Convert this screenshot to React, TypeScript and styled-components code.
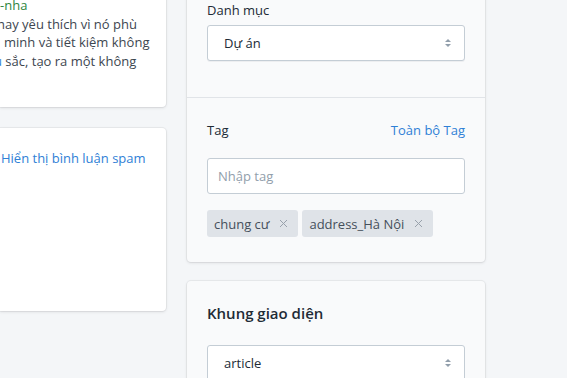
import * as React from 'react'
import styled, { createGlobalStyle } from 'styled-components'

const GlobalStyle = createGlobalStyle`
  html, body {
    margin: 0;
    padding: 0;
    background: #f4f6f8;
    font-family: "Open Sans", "Noto Sans", sans-serif;
    color: #212b36;
    overflow: hidden;
  }
`

const Page = styled.div`
  display: flex;
  gap: 21px;
  align-items: flex-start;
  margin-top: -20px;
  width: 567px;
  height: 398px;
  overflow: hidden;
`

const LeftColumn = styled.div`
  display: flex;
  flex-direction: column;
  gap: 21px;
  width: 166px;
  flex: 0 0 166px;
`

const RightColumn = styled.div`
  display: flex;
  flex-direction: column;
  gap: 19px;
  width: 298px;
  flex: 0 0 298px;
`

const Card = styled.div<{ $tint?: boolean }>`
  background: ${p => (p.$tint ? '#f9fafb' : '#ffffff')};
  border-radius: 0 4px 4px 0;
  box-shadow: 0 0 0 1px rgba(63, 63, 68, 0.06), 0 1px 3px rgba(63, 63, 68, 0.14);
  overflow: hidden;
`

const RightCard = styled(Card)`
  border-radius: 4px;
`

const TextBlock = styled.div`
  padding: 16px 0 37px;
  font-size: 13px;
  line-height: 18.5px;
  color: #3d4650;
`

const Line = styled.div<{ $offset: number }>`
  white-space: nowrap;
  margin-left: ${p => p.$offset}px;
`

const Green = styled.span`
  color: #2e8540;
`

const Blue = styled.span`
  color: #3a86d8;
`

const SpamLink = styled.a`
  display: block;
  height: 183px;
  box-sizing: border-box;
  padding-top: 21px;
  margin-left: 1px;
  font-size: 13px;
  line-height: 18px;
  color: #2f80d6;
  text-decoration: none;
  white-space: nowrap;
`

const Section = styled.div<{ $top: number; $bottom: number; $divider?: boolean }>`
  padding: ${p => p.$top}px 20px ${p => p.$bottom}px;
  border-bottom: ${p => (p.$divider ? '1px solid #e1e4e8' : 'none')};
`

const Label = styled.div`
  font-size: 13px;
  line-height: 20px;
  color: #212b36;
  margin-bottom: 5px;
`

const LabelRow = styled.div`
  display: flex;
  justify-content: space-between;
  align-items: center;
  font-size: 13px;
  line-height: 20px;
  margin-bottom: 18px;
`

const AllTags = styled.a`
  color: #2f80d6;
  text-decoration: none;
`

const Heading = styled.div`
  font-size: 15px;
  font-weight: 600;
  line-height: 20px;
  color: #212b36;
  margin-bottom: 22px;
`

const SelectBox = styled.div`
  display: flex;
  align-items: center;
  justify-content: space-between;
  height: 36px;
  box-sizing: border-box;
  padding: 0 12px 0 16px;
  background: #fff;
  border: 1px solid #c4cdd5;
  border-radius: 3px;
  box-shadow: 0 1px 0 rgba(22, 29, 37, 0.05);
  font-size: 13px;
  color: #212b36;
`

const TagInput = styled.div`
  height: 36px;
  box-sizing: border-box;
  padding: 0 10px;
  display: flex;
  align-items: center;
  background: #fff;
  border: 1px solid #c4cdd5;
  border-radius: 3px;
  font-size: 13px;
  color: #919eab;
`

const Tags = styled.div`
  display: flex;
  gap: 4px;
  margin-top: 16px;
`

const Chip = styled.div`
  display: flex;
  align-items: center;
  gap: 10px;
  height: 27px;
  padding: 0 10px 0 7px;
  background: #dfe3e8;
  border-radius: 3px;
  font-size: 13px;
  color: #454f5b;
`

const Caret = () => (
  <svg width="8" height="12" viewBox="0 0 8 12">
    <path d="M4 2 L7 5 H1 Z" fill="#919eab" />
    <path d="M4 10 L7 7 H1 Z" fill="#919eab" />
  </svg>
)

const Close = () => (
  <svg width="9" height="9" viewBox="0 0 9 9">
    <path d="M1 1 L8 8 M8 1 L1 8" stroke="#98a1ab" strokeWidth="1" />
  </svg>
)

export default function App() {
  return (
    <>
      <GlobalStyle />
      <Page>
        <LeftColumn>
          <Card>
            <TextBlock>
              <Line $offset={0}>
                <Green>-nha</Green>
              </Line>
              <Line $offset={-3}>hay yêu thích vì nó phù</Line>
              <Line $offset={4}>minh và tiết kiệm không</Line>
              <Line $offset={-6}>
                <Blue>u</Blue> sắc, tạo ra một không
              </Line>
            </TextBlock>
          </Card>
          <Card>
            <SpamLink href="#">Hiển thị bình luận spam</SpamLink>
          </Card>
        </LeftColumn>
        <RightColumn>
          <RightCard $tint>
            <Section $top={20} $bottom={36} $divider>
              <Label>Danh mục</Label>
              <SelectBox>
                <span>Dự án</span>
                <Caret />
              </SelectBox>
            </Section>
            <Section $top={22} $bottom={25}>
              <LabelRow>
                <span>Tag</span>
                <AllTags href="#">Toàn bộ Tag</AllTags>
              </LabelRow>
              <TagInput>Nhập tag</TagInput>
              <Tags>
                <Chip>
                  chung cư <Close />
                </Chip>
                <Chip>
                  address_Hà Nội <Close />
                </Chip>
              </Tags>
            </Section>
          </RightCard>
          <RightCard $tint>
            <Section $top={22} $bottom={20}>
              <Heading>Khung giao diện</Heading>
              <SelectBox>
                <span>article</span>
                <Caret />
              </SelectBox>
            </Section>
          </RightCard>
        </RightColumn>
      </Page>
    </>
  )
}
